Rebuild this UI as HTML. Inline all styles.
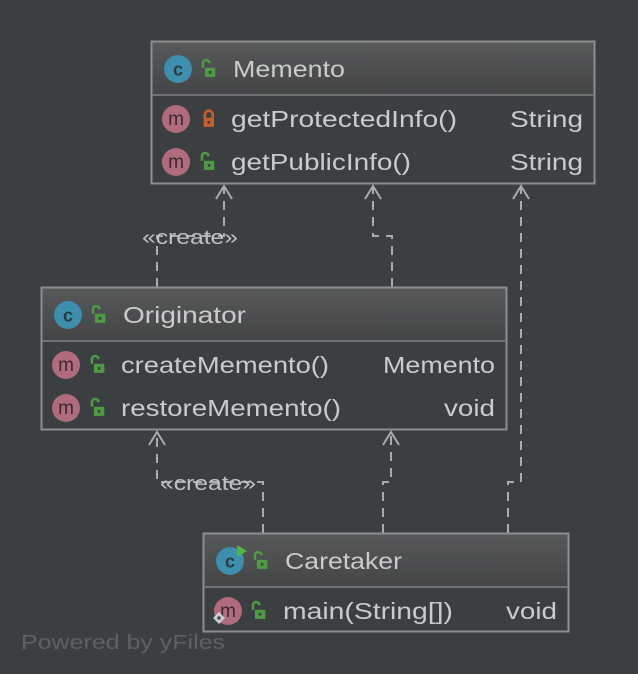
<!DOCTYPE html>
<html><head><meta charset="utf-8"><style>
html,body{margin:0;padding:0;background:#3c3f41;}
svg{display:block;}
text{font-family:"Liberation Sans","DejaVu Sans",sans-serif;}
</style></head><body>
<svg width="638" height="674" viewBox="0 0 638 674" xmlns="http://www.w3.org/2000/svg">
<defs>
<linearGradient id="hg" x1="0" y1="0" x2="0" y2="1">
<stop offset="0" stop-color="#575859"/><stop offset="1" stop-color="#444546"/>
</linearGradient>
<g id="unlock" transform="scale(1.3)"><path d="M1.5 6 V2.5 A2.5 2.5 0 0 1 6.5 2.5" fill="none" stroke="#4f9a45" stroke-width="2"/><rect x="3" y="6" width="8" height="7" fill="#4f9a45"/><rect x="6" y="8.5" width="2" height="2" fill="#3c3f41"/></g>
<g id="lock" transform="scale(1.3)"><path d="M3 6 V3.5 A3 3 0 0 1 9 3.5 V6" fill="none" stroke="#c8602c" stroke-width="2"/><rect x="2" y="6" width="8" height="7" fill="#c8602c"/><rect x="5" y="8.5" width="2" height="2" fill="#3c3f41"/></g>
<g id="cicon"><circle cx="0" cy="0" r="14" fill="#3e8eae"/><text x="0" y="6.5" font-size="18" text-anchor="middle" fill="#2b3a40" font-weight="bold">c</text></g>
<g id="micon"><circle cx="0" cy="0" r="14" fill="#b06b7c"/><text x="0" y="6" font-size="19" text-anchor="middle" fill="#3a2a2e">m</text></g>
</defs>

<g fill="none" stroke="#a9abad" stroke-width="2" stroke-dasharray="9,7">
<path d="M157 287 V236 H224 V186"/>
<path d="M392 287 V236 H373 V186"/>
<path d="M508 533 V482 H521 V186"/>
<path d="M263 533 V482 H157 V432"/>
<path d="M383 533 V482 H391 V432"/>
</g>
<g fill="none" stroke="#a9abad" stroke-width="2">
<path d="M216 199 L224 186 L232 199"/>
<path d="M365 199 L373 186 L381 199"/>
<path d="M513 199 L521 186 L529 199"/>
<path d="M149 445 L157 432 L165 445"/>
<path d="M383 445 L391 432 L399 445"/>
</g>
<text x="142" y="244" font-size="20" fill="#bfc1c3" textLength="96" lengthAdjust="spacingAndGlyphs">«create»</text>
<text x="160" y="490" font-size="20" fill="#bfc1c3" textLength="96" lengthAdjust="spacingAndGlyphs">«create»</text>

<rect x="151.5" y="41.5" width="443" height="142" fill="#3c3f41" stroke="#8c8e90" stroke-width="2"/>
<rect x="152.5" y="42.5" width="441" height="52" fill="url(#hg)"/>
<line x1="152" y1="95" x2="594" y2="95" stroke="#707274" stroke-width="2"/>
<use href="#cicon" x="178" y="69"/>
<use href="#unlock" x="201" y="60"/>
<text x="233" y="77" font-size="23" fill="#c9cbcd" textLength="112" lengthAdjust="spacingAndGlyphs">Memento</text>
<use href="#micon" x="176" y="119"/>
<use href="#lock" x="201" y="110"/>
<text x="231" y="127" font-size="23" fill="#c9cbcd" textLength="226" lengthAdjust="spacingAndGlyphs">getProtectedInfo()</text>
<text x="510" y="127" font-size="23" fill="#c9cbcd" textLength="73" lengthAdjust="spacingAndGlyphs">String</text>
<use href="#micon" x="176" y="162"/>
<use href="#unlock" x="200" y="153"/>
<text x="231" y="170" font-size="23" fill="#c9cbcd" textLength="180" lengthAdjust="spacingAndGlyphs">getPublicInfo()</text>
<text x="510" y="170" font-size="23" fill="#c9cbcd" textLength="73" lengthAdjust="spacingAndGlyphs">String</text>

<rect x="41.5" y="287.5" width="465" height="142" fill="#3c3f41" stroke="#8c8e90" stroke-width="2"/>
<rect x="42.5" y="288.5" width="463" height="52" fill="url(#hg)"/>
<line x1="42" y1="341" x2="506" y2="341" stroke="#707274" stroke-width="2"/>
<use href="#cicon" x="68" y="315"/>
<use href="#unlock" x="91" y="306"/>
<text x="123" y="323" font-size="23" fill="#c9cbcd" textLength="123" lengthAdjust="spacingAndGlyphs">Originator</text>
<use href="#micon" x="66" y="365"/>
<use href="#unlock" x="90" y="356"/>
<text x="121" y="373" font-size="23" fill="#c9cbcd" textLength="208" lengthAdjust="spacingAndGlyphs">createMemento()</text>
<text x="383" y="373" font-size="23" fill="#c9cbcd" textLength="112" lengthAdjust="spacingAndGlyphs">Memento</text>
<use href="#micon" x="66" y="408"/>
<use href="#unlock" x="90" y="399"/>
<text x="121" y="416" font-size="23" fill="#c9cbcd" textLength="220" lengthAdjust="spacingAndGlyphs">restoreMemento()</text>
<text x="444" y="416" font-size="23" fill="#c9cbcd" textLength="51" lengthAdjust="spacingAndGlyphs">void</text>

<rect x="203.5" y="533.5" width="365" height="98" fill="#3c3f41" stroke="#8c8e90" stroke-width="2"/>
<rect x="204.5" y="534.5" width="363" height="52" fill="url(#hg)"/>
<line x1="204" y1="587" x2="568" y2="587" stroke="#707274" stroke-width="2"/>
<use href="#cicon" x="230" y="561"/>
<path d="M237 545 L247 551 L237 557 Z" fill="#4cb83e"/>
<use href="#unlock" x="253" y="552"/>
<text x="285" y="569" font-size="23" fill="#c9cbcd" textLength="117" lengthAdjust="spacingAndGlyphs">Caretaker</text>
<use href="#micon" x="228" y="611"/>
<path d="M219 612 L225 618 L219 624 L213 618 Z" fill="#c9ced6"/>
<rect x="217.5" y="616.5" width="3" height="3" fill="#3c3f41"/>
<use href="#unlock" x="251" y="602"/>
<text x="283" y="619" font-size="23" fill="#c9cbcd" textLength="170" lengthAdjust="spacingAndGlyphs">main(String[])</text>
<text x="506" y="619" font-size="23" fill="#c9cbcd" textLength="51" lengthAdjust="spacingAndGlyphs">void</text>

<text x="21" y="649" font-size="20" fill="#5e6164" textLength="204" lengthAdjust="spacingAndGlyphs">Powered by yFiles</text>
</svg>
</body></html>
